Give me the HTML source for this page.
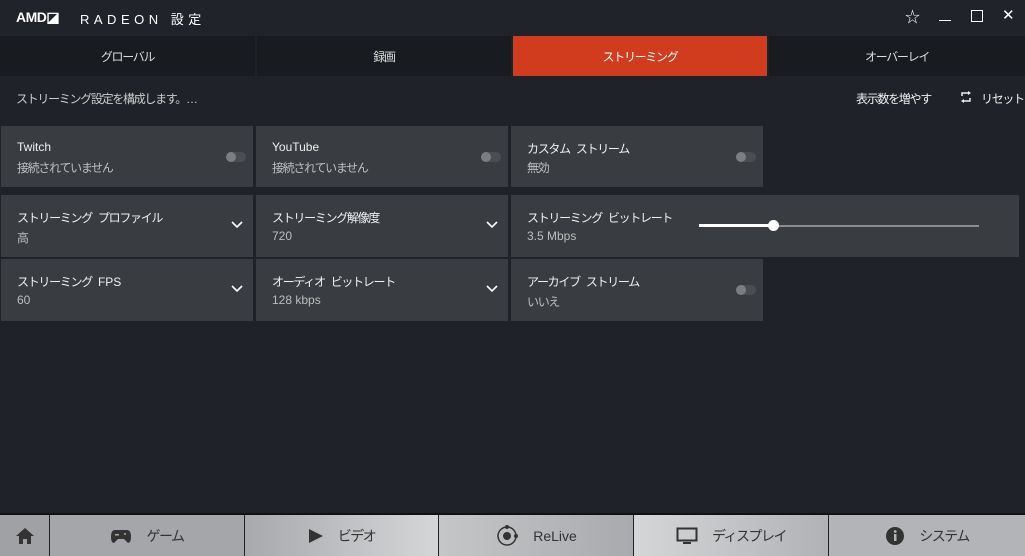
<!DOCTYPE html><html><head><meta charset="utf-8"><style>
*{margin:0;padding:0;box-sizing:border-box}
body{width:1025px;height:556px;background:#1f2228;font-family:"Liberation Sans","Noto Sans CJK JP",sans-serif;color:#e8e8e8;position:relative;overflow:hidden;letter-spacing:-1.3px;word-spacing:4px;white-space:nowrap}
.l{letter-spacing:0;word-spacing:0}
.a{position:absolute}
.tab{position:absolute;top:36px;height:40px;background:#181b20;font-size:12px;display:flex;align-items:center;justify-content:center;color:#ddd}
.card{position:absolute;background:#393d42}
.t{position:absolute;left:16px;font-size:12px;color:#f0f0f0}
.s{position:absolute;left:16px;font-size:12px;color:#bdbdbd}
.tg{position:absolute;width:20px;height:10px;border-radius:5px;background:#4a4e53}
.tg:before{content:"";position:absolute;left:0;top:0;width:10px;height:10px;border-radius:5px;background:#7b7e82}
.nav{position:absolute;top:515px;height:41px;display:flex;align-items:center;justify-content:center;gap:14px;font-size:14px;color:#333;border-left:1px solid #222;letter-spacing:-1.5px}
</style></head><body>
<div class="a" style="left:0;top:0;width:1025px;height:36px;background:#20232a"></div>
<div class="a l" style="left:16px;top:9px;font-weight:bold;font-size:14px;color:#fff;letter-spacing:-0.5px">AMD◪</div>
<div class="a l" style="left:80px;top:9px;font-size:13px;color:#fff;letter-spacing:4.5px">RADEON 設定</div>
<div class="a" style="left:905px;top:6px;font-size:15px;color:#fff">☆</div>
<div class="a" style="left:939px;top:20px;width:12px;height:1px;background:#fff"></div>
<div class="a" style="left:971px;top:10px;width:12px;height:12px;border:1px solid #fff"></div>
<div class="a" style="left:1002px;top:6px;font-size:15px;color:#fff">✕</div>
<div class="tab" style="left:0;width:255px">グローバル</div>
<div class="tab" style="left:257px;width:254px">録画</div>
<div class="tab" style="left:513px;width:254px;background:#d13b1e;color:#fff">ストリーミング</div>
<div class="tab" style="left:769px;width:256px">オーバーレイ</div>
<div class="a" style="left:16px;top:90px;font-size:12px;color:#ccc">ストリーミング設定を構成します。…</div>
<div class="a" style="left:856px;top:90px;font-size:12px;color:#eee">表示数を増やす</div>
<svg class="a" style="left:960px;top:91px" width="12" height="12"><path d="M2 5V2H9M10 7V10H3" stroke="#eee" stroke-width="1.5" fill="none"/><path d="M8 0L11 2L8 4Z M4 8L1 10L4 12Z" fill="#eee"/></svg>
<div class="a" style="left:981px;top:90px;font-size:12px;color:#eee">リセット</div>

<div class="card" style="left:1px;top:126px;width:252px;height:61px"><div class="t l" style="top:14px">Twitch</div><div class="s" style="top:33px">接続されていません</div><div class="tg" style="left:225px;top:26px"></div></div>
<div class="card" style="left:256px;top:126px;width:252px;height:61px"><div class="t l" style="top:14px">YouTube</div><div class="s" style="top:33px">接続されていません</div><div class="tg" style="left:225px;top:26px"></div></div>
<div class="card" style="left:511px;top:126px;width:252px;height:61px"><div class="t" style="top:14px">カスタム ストリーム</div><div class="s" style="top:33px">無効</div><div class="tg" style="left:225px;top:26px"></div></div>

<div class="card" style="left:1px;top:195px;width:252px;height:62px"><div class="t" style="top:14px">ストリーミング プロファイル</div><div class="s" style="top:34px">高</div><svg class="a" style="left:230px;top:26px" width="12" height="8"><path d="M1 1L6 6L11 1" stroke="#fff" stroke-width="1.6" fill="none"/></svg></div>
<div class="card" style="left:256px;top:195px;width:252px;height:62px"><div class="t" style="top:14px">ストリーミング解像度</div><div class="s l" style="top:34px">720</div><svg class="a" style="left:230px;top:26px" width="12" height="8"><path d="M1 1L6 6L11 1" stroke="#fff" stroke-width="1.6" fill="none"/></svg></div>
<div class="card" style="left:511px;top:195px;width:508px;height:62px"><div class="t" style="top:14px">ストリーミング ビットレート</div><div class="s l" style="top:34px">3.5 Mbps</div>
<div class="a" style="left:188px;top:30px;width:280px;height:2px;background:#8a8d91"></div><div class="a" style="left:188px;top:29px;width:75px;height:3px;background:#fff"></div><div class="a" style="left:257px;top:25px;width:11px;height:11px;border-radius:50%;background:#fff"></div></div>

<div class="card" style="left:1px;top:259px;width:252px;height:62px"><div class="t" style="top:14px">ストリーミング <span class="l">FPS</span></div><div class="s l" style="top:34px">60</div><svg class="a" style="left:230px;top:26px" width="12" height="8"><path d="M1 1L6 6L11 1" stroke="#fff" stroke-width="1.6" fill="none"/></svg></div>
<div class="card" style="left:256px;top:259px;width:252px;height:62px"><div class="t" style="top:14px">オーディオ ビットレート</div><div class="s l" style="top:34px">128 kbps</div><svg class="a" style="left:230px;top:26px" width="12" height="8"><path d="M1 1L6 6L11 1" stroke="#fff" stroke-width="1.6" fill="none"/></svg></div>
<div class="card" style="left:511px;top:259px;width:252px;height:62px"><div class="t" style="top:14px">アーカイブ ストリーム</div><div class="s" style="top:34px">いいえ</div><div class="tg" style="left:225px;top:26px"></div></div>

<div class="a" style="left:0;top:513px;width:1025px;height:2px;background:#111"></div>
<div class="nav" style="left:0;width:49px;background:#9fa1a4;border:none"><svg width="20" height="18"><path d="M10 1L1 9H4V17H8V12H12V17H16V9H19Z" fill="#333"/></svg></div>
<div class="nav" style="left:49px;width:195px;background:#a4a6a9"><svg width="22" height="16"><path d="M5 2H17Q21 2 21 9Q21 15 18 15L14 11H8L4 15Q1 15 1 9Q1 2 5 2Z" fill="#333"/><circle cx="15" cy="6" r="1" fill="#aaa"/><rect x="5" y="6" width="4" height="1.5" fill="#aaa"/></svg>ゲーム</div>
<div class="nav" style="left:244px;width:194px;background:linear-gradient(90deg,#a7a9ac,#d4d6d8)"><svg width="16" height="16"><path d="M1 1L15 8L1 15Z" fill="#333"/></svg>ビデオ</div>
<div class="nav" style="left:438px;width:195px;background:linear-gradient(90deg,#c4c6c8,#a8aaad)"><svg width="24" height="24"><circle cx="12" cy="12" r="9" stroke="#333" stroke-width="1.5" fill="none"/><circle cx="12" cy="12" r="4" fill="#333"/><circle cx="12" cy="3" r="2" fill="#333"/><circle cx="21" cy="12" r="2" fill="#333"/></svg><span class="l">ReLive</span></div>
<div class="nav" style="left:633px;width:195px;background:linear-gradient(90deg,#d4d6d8,#b0b2b5)"><svg width="22" height="18"><rect x="1.5" y="1.5" width="19" height="12" stroke="#333" stroke-width="2" fill="none"/><rect x="7" y="15" width="8" height="2" fill="#333"/></svg>ディスプレイ</div>
<div class="nav" style="left:828px;width:197px;background:#b2b4b7"><svg width="20" height="20"><circle cx="10" cy="10" r="9" fill="#333"/><rect x="9" y="8" width="2.5" height="7" fill="#b2b4b7"/><circle cx="10.2" cy="5.5" r="1.4" fill="#b2b4b7"/></svg>システム</div>
</body></html>
